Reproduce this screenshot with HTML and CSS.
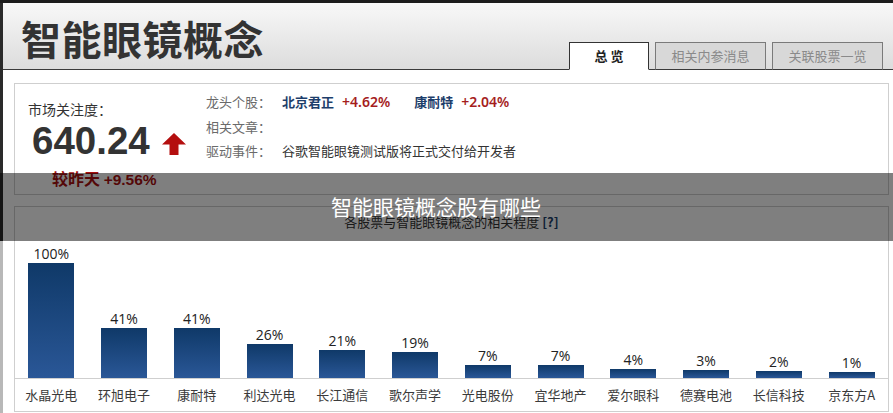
FILE: index.html
```html
<!DOCTYPE html>
<html lang="zh-CN">
<head>
<meta charset="utf-8">
<title>智能眼镜概念</title>
<link rel="stylesheet" href="styles.css">
</head>
<body>
<div class="frame">
  <div class="side"></div>
  <div class="page">
    <header class="head">
      <h1 class="title">智能眼镜概念</h1>
      <nav class="tabs">
        <span class="tab tab-on">总 览</span>
        <span class="tab">相关内参消息</span>
        <span class="tab tab-last">关联股票一览</span>
      </nav>
    </header>
    <main class="main">
      <section class="card summary">
        <div class="attn">
          <div class="attn-label">市场关注度：</div>
          <div class="attn-value">
            <span class="num">640.24</span>
            <svg class="arrow" width="24" height="22" viewBox="0 0 24 22"><path d="M12 0 L24 11.5 L16.5 11.5 L16.5 22 L7.5 22 L7.5 11.5 L0 11.5 Z" fill="#b40f0f"/></svg>
          </div>
          <div class="attn-change">较昨天 <span class="chg">+9.56%</span></div>
        </div>
        <div class="info">
          <div class="row"><span class="lbl">龙头个股：</span><span class="stk">北京君正</span><span class="pct">+4.62%</span><span class="stk stk2">康耐特</span><span class="pct">+2.04%</span></div>
          <div class="row"><span class="lbl">相关文章：</span></div>
          <div class="row"><span class="lbl">驱动事件：</span><span class="evt">谷歌智能眼镜测试版将正式交付给开发者</span></div>
        </div>
      </section>
      <section class="card chart">
        <div class="chart-title">各股票与智能眼镜概念的相关程度 <span class="help">[?]</span></div>
        <div class="plot">
          <div class="col"><span class="val">100%</span><span class="bar" style="height:115px"></span></div>
          <div class="col"><span class="val">41%</span><span class="bar" style="height:50px"></span></div>
          <div class="col"><span class="val">41%</span><span class="bar" style="height:50px"></span></div>
          <div class="col"><span class="val">26%</span><span class="bar" style="height:34px"></span></div>
          <div class="col"><span class="val">21%</span><span class="bar" style="height:28px"></span></div>
          <div class="col"><span class="val">19%</span><span class="bar" style="height:26px"></span></div>
          <div class="col"><span class="val">7%</span><span class="bar" style="height:13px"></span></div>
          <div class="col"><span class="val">7%</span><span class="bar" style="height:13px"></span></div>
          <div class="col"><span class="val">4%</span><span class="bar" style="height:9px"></span></div>
          <div class="col"><span class="val">3%</span><span class="bar" style="height:8px"></span></div>
          <div class="col"><span class="val">2%</span><span class="bar" style="height:7px"></span></div>
          <div class="col"><span class="val">1%</span><span class="bar" style="height:6px"></span></div>
        </div>
        <div class="names">
          <span>水晶光电</span><span>环旭电子</span><span>康耐特</span><span>利达光电</span>
          <span>长江通信</span><span>歌尔声学</span><span>光电股份</span><span>宜华地产</span>
          <span>爱尔眼科</span><span>德赛电池</span><span>长信科技</span><span>京东方A</span>
        </div>
      </section>
    </main>
  </div>
</div>
<div class="overlay">智能眼镜概念股有哪些</div>
</body>
</html>
```
FILE: styles.css
```css
html, body {
  margin: 0;
  padding: 0;
}
body {
  width: 893px;
  height: 413px;
  overflow: hidden;
  background: #ffffff;
  font-family: "Noto Sans", "Noto Sans CJK SC", sans-serif;
  color: #333;
  position: relative;
}
.frame {
  display: flex;
  height: 413px;
  border-top: 3px solid #1c1c1c;
  box-sizing: border-box;
}
.side {
  width: 3px;
  flex: none;
  background: linear-gradient(to bottom, #2a2a2a 0, #2a2a2a 238px, #b8b8b8 238px, #b8b8b8 100%);
}
.page {
  flex: 1;
  display: flex;
  flex-direction: column;
}
.head {
  height: 66px;
  display: flex;
  justify-content: space-between;
  align-items: flex-end;
  background: linear-gradient(to bottom, #f8f8f8, #dcdcdc);
  border-bottom: 1px solid #3a3a3a;
  padding: 0 10px 0 18px;
}
.title {
  margin: 0;
  align-self: stretch;
  font-family: "Noto Sans CJK SC", sans-serif;
  font-size: 40px;
  font-weight: 700;
  line-height: 66px;
  padding-top: 2px;
  color: #333;
  letter-spacing: 0.5px;
}
.tabs {
  display: flex;
  gap: 6px;
  margin-bottom: -1px;
}
.tab {
  font-family: "Noto Sans CJK SC", sans-serif;
  font-size: 13px;
  height: 26px;
  line-height: 26px;
  width: 109px;
  text-align: center;
  background: #d8d8d8;
  border: 1px solid #7a7a7a;
  border-bottom: 1px solid #3a3a3a;
  color: #8a8a8a;
}
.tab-on {
  width: 78px;
  background: #fff;
  border: 1px solid #333;
  border-bottom: 1px solid #fff;
  color: #222;
  font-weight: 700;
  height: 26px;
}
.main {
  flex: 1;
  padding: 13px 4px 0 11px;
  display: flex;
  flex-direction: column;
  gap: 11px;
}
.card {
  border: 1px solid #cfcfcf;
  box-sizing: border-box;
}
.summary {
  height: 112px;
  display: flex;
  padding: 6px 0 0 13px;
}
.attn {
  width: 176px;
}
.attn-label {
  font-family: "Noto Sans CJK SC", sans-serif;
  font-size: 14px;
  line-height: 20px;
  margin-top: 9px;
  color: #333;
}
.attn-value {
  display: flex;
  align-items: center;
  margin-left: 4px;
  margin-top: 2px;
  height: 40px;
}
.num {
  font-family: "Liberation Sans", Arial, sans-serif;
  font-weight: 700;
  font-size: 38.5px;
  line-height: 40px;
  color: #333;
}
.arrow {
  margin-left: 12px;
  margin-top: 5px;
}
.attn-change {
  margin-top: 6px;
  margin-left: 24px;
  font-family: "Noto Sans CJK SC", sans-serif;
  font-weight: 700;
  font-size: 16px;
  line-height: 22px;
  color: #a81010;
}
.chg {
  font-family: "Liberation Sans", Arial, sans-serif;
  font-weight: 700;
  font-size: 15.5px;
}
.info {
  font-family: "Noto Sans CJK SC", sans-serif;
  font-size: 13px;
  padding-left: 2px;
}
.row {
  height: 24.5px;
  line-height: 24.5px;
  display: flex;
  white-space: nowrap;
}
.lbl {
  width: 76px;
  color: #6a6a6a;
}
.stk {
  color: #1d3e6b;
  font-weight: 700;
  margin-right: 8px;
}
.stk2 {
  margin-left: 24px;
  margin-right: 8px;
}
.pct {
  color: #a51d1d;
  font-family: "Noto Sans", sans-serif;
  font-size: 14px;
  font-weight: 600;
}
.evt {
  color: #333;
}
.chart {
  height: 206px;
  display: flex;
  flex-direction: column;
}
.chart-title {
  height: 30px;
  line-height: 30px;
  text-align: center;
  font-family: "Noto Sans CJK SC", sans-serif;
  font-size: 13px;
  color: #333;
}
.help {
  color: #1d3e6b;
  font-weight: 700;
}
.plot {
  height: 141px;
  display: grid;
  grid-template-columns: repeat(12, 1fr);
  align-items: end;
}
.col {
  display: flex;
  flex-direction: column;
  align-items: center;
  justify-content: flex-end;
}
.val {
  font-family: "Open Sans", "Noto Sans", sans-serif;
  font-size: 14px;
  line-height: 16px;
  margin-bottom: 1px;
  color: #222;
}
.bar {
  width: 46px;
  display: block;
  background: linear-gradient(to bottom, #0f3968, #2a5797);
}
.names {
  flex: 1;
  border-top: 1px solid #cfcfcf;
  display: grid;
  grid-template-columns: repeat(12, 1fr);
  font-family: "Noto Sans CJK SC", sans-serif;
  font-size: 13px;
  line-height: 32px;
  color: #3a3a3a;
  text-align: center;
}
.overlay {
  position: absolute;
  left: 0;
  top: 173px;
  width: 893px;
  height: 68px;
  line-height: 66px;
  background: rgba(0, 0, 0, 0.5);
  color: #fff;
  font-family: "Noto Sans CJK SC", sans-serif;
  font-size: 21px;
  text-align: center;
  padding-right: 21px;
  box-sizing: border-box;
}
```
